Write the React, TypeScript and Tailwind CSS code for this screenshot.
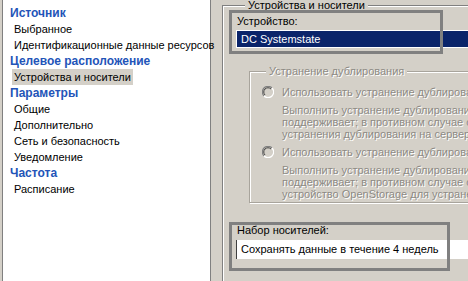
import React from 'react';

const FONT = "font-['Liberation_Sans',Arial,sans-serif]";

type NavRow = { label: string; kind: 'head' | 'item'; selected?: boolean };

const rows: NavRow[] = [
  { label: 'Источник', kind: 'head' },
  { label: 'Выбранное', kind: 'item' },
  { label: 'Идентификационные данные ресурсов', kind: 'item' },
  { label: 'Целевое расположение', kind: 'head' },
  { label: 'Устройства и носители', kind: 'item', selected: true },
  { label: 'Параметры', kind: 'head' },
  { label: 'Общие', kind: 'item' },
  { label: 'Дополнительно', kind: 'item' },
  { label: 'Сеть и безопасность', kind: 'item' },
  { label: 'Уведомление', kind: 'item' },
  { label: 'Частота', kind: 'head' },
  { label: 'Расписание', kind: 'item' },
];

const Radio = () => (
  <svg width="12" height="12" viewBox="0 0 12 12" className="shrink-0">
    <circle cx="6" cy="6" r="5" fill="#d4d0c8" />
    <path d="M10 2 A5.5 5.5 0 0 0 2 10" fill="none" stroke="#808080" strokeWidth="1.2" />
    <path d="M2 10 A5.5 5.5 0 0 0 10 2" fill="none" stroke="#ffffff" strokeWidth="1.2" />
    <path d="M9 3 A4.2 4.2 0 0 0 3 9" fill="none" stroke="#404040" strokeWidth="1" />
  </svg>
);

const dim = 'text-[#8d8a84] [text-shadow:1px_1px_0_#fff]';

const Option = ({ desc }: { desc: string[] }) => (
  <>
    <div className="flex items-center gap-[8px] leading-[14px] whitespace-nowrap">
      <Radio />
      <span className={dim}>Использовать устранение дублирования на клиенте</span>
    </div>
    <div className={`pl-[20px] leading-[12px] whitespace-nowrap mt-[5px] ${dim}`}>
      {desc.map((d) => (
        <div key={d}>{d}</div>
      ))}
    </div>
  </>
);

export default function App() {
  return (
    <div className={`relative w-[468px] h-[281px] overflow-hidden bg-[#d4d0c8] flex text-[11px] text-black ${FONT}`}>
      {/* left tree */}
      <div className="ml-[2px] w-[209px] h-full bg-white border-l border-r border-[#808080] pt-[5px]">
        {rows.map((r) =>
          r.kind === 'head' ? (
            <div key={r.label} className="h-[16px] leading-[16px] pl-[7px] text-[12px] font-bold text-[#2354b8] whitespace-nowrap">
              {r.label}
            </div>
          ) : (
            <div key={r.label} className="h-[16px] leading-[16px] pl-[9px] whitespace-nowrap">
              <span className={`inline-block px-[2px] ${r.selected ? 'bg-[#d4d0c8]' : ''}`}>{r.label}</span>
            </div>
          )
        )}
      </div>

      {/* right page */}
      <div className="flex-1 min-w-0 pl-[11px]">
        <fieldset className="mt-[-2px] w-[300px] h-[300px] border border-[#808080] shadow-[1px_1px_0_#fff,inset_1px_1px_0_#fff] pl-[14px]">
          <legend className="ml-[8px] px-[3px] leading-[14px] bg-[#d4d0c8]">Устройства и носители</legend>
          <div className="mt-[2px] leading-[14px]">Устройство:</div>
          <div className="mt-[2px] -ml-[1px] bg-white p-[1px] h-[18px]">
            <div className="h-[16px] bg-[#0a246a] text-white leading-[16px] pl-[4px]">DC Systemstate</div>
          </div>

          <fieldset className="mt-[16px] ml-[12px] w-[260px] border border-[#a8a49c] shadow-[1px_1px_0_#fff,inset_1px_1px_0_#fff] pl-[12px] pb-[2px]">
            <legend className={`ml-[4px] px-[3px] leading-[14px] bg-[#d4d0c8] ${dim}`}>Устранение дублирования</legend>
            <div className="mt-[7px]" />
            <Option
              desc={[
                'Выполнить устранение дублирования на клиенте, если устройство',
                'поддерживает; в противном случае с помощью',
                'устранения дублирования на сервере',
              ]}
            />
            <div className="mt-[5px]" />
            <Option
              desc={[
                'Выполнить устранение дублирования на клиенте, если устройство',
                'поддерживает; в противном случае с помощью',
                'устройство OpenStorage для устранения дублирования',
              ]}
            />
          </fieldset>

          <div className="mt-[20px] leading-[14px]">Набор носителей:</div>
          <div className="mt-[3px] -ml-[1px] h-[19px] bg-white border-l border-[#404040] leading-[18px] pl-[4px] whitespace-nowrap">
            Сохранять данные в течение 4 недель
          </div>
          <div className="mt-[19px] pl-[5px] leading-[14px]">Дополнительно</div>
        </fieldset>
      </div>

      {/* annotation frames */}
      <div className="absolute left-[229px] top-[10px] w-[214px] h-[44px] border-[3px] border-[#808080]" />
      <div className="absolute left-[229px] top-[222px] w-[221px] h-[49px] border-[3px] border-[#808080]" />
    </div>
  );
}
